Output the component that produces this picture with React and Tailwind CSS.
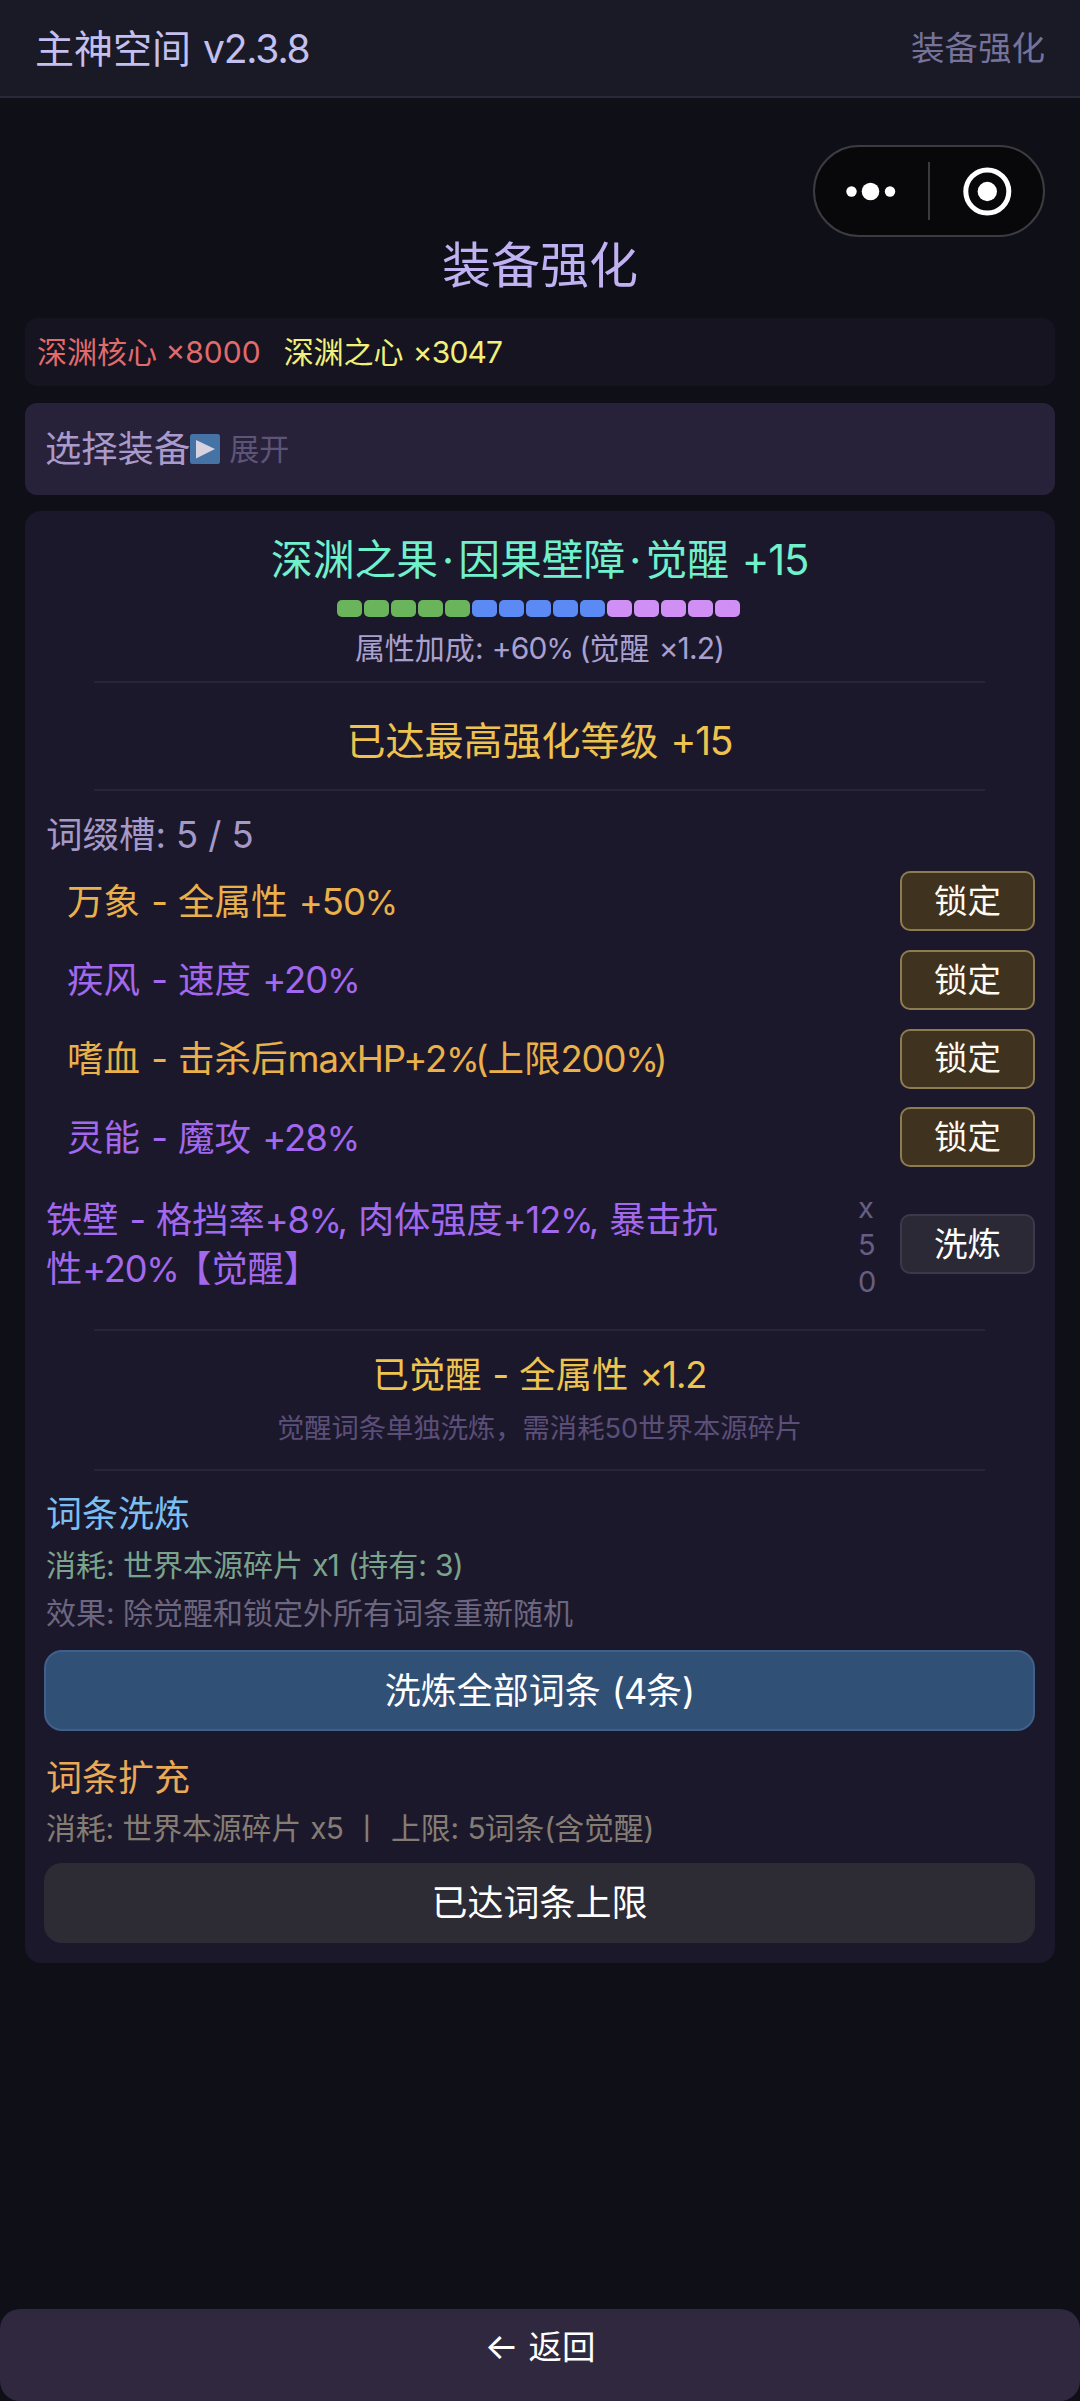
import React, { useState } from 'react';

const affixes = [
    { id: 1, text: '万象 - 全属性 +50%', color: 'text-[#eab04a]' },
    { id: 2, text: '疾风 - 速度 +20%', color: 'text-[#a268ee]' },
    { id: 3, text: '嗜血 - 击杀后maxHP+2%(上限200%)', color: 'text-[#eab04a]' },
    { id: 4, text: '灵能 - 魔攻 +28%', color: 'text-[#a268ee]' },
];

// latin runs are set a little tighter than the chinese text around them
const Mixed = ({ children }) =>
    children.split(/(%|[ -$&-~×]+)/).map((part, i) => {
        if (part === '%') {
            return (
                <span key={i} className="text-[0.93em] tracking-[-0.13em]">
                    {part}
                </span>
            );
        }
        if (i % 2 === 1) {
            return (
                <span
                    key={i}
                    className="tracking-[-0.03em] [word-spacing:0.055em]"
                >
                    {part}
                </span>
            );
        }
        return part;
    });

const Divider = () => <div className="mx-auto h-0.5 w-[891px] bg-[#28243a]" />;

const ProgressBar = () => {
    const cells = [];
    for (let i = 0; i < 15; i++) {
        let color = 'bg-[#6ab45c]';
        if (i >= 10) {
            color = 'bg-[#cf8ff5]';
        } else if (i >= 5) {
            color = 'bg-[#5b8af5]';
        }
        cells.push(
            <div key={i} className={`h-[17px] w-[25px] rounded-[5px] ${color}`} />
        );
    }
    return (
        <div className="mt-[15px] flex justify-center gap-0.5 pr-0.5">
            {cells}
        </div>
    );
};

const Capsule = () => (
    <div className="absolute top-[145px] left-[813px] flex h-[92px] w-[232px] items-center rounded-full border-2 border-[#3b3b40] bg-[#08080b]">
        <svg width="228" height="88" viewBox="0 0 228 88">
            <circle cx="36.5" cy="44.5" r="5.2" fill="#fff" />
            <circle cx="55.5" cy="44.5" r="8.8" fill="#fff" />
            <circle cx="75" cy="44.5" r="5.2" fill="#fff" />
            <rect x="113" y="15" width="2" height="58" fill="#3a3a3f" />
            <circle
                cx="172.3"
                cy="44.5"
                r="21.5"
                fill="none"
                stroke="#fff"
                strokeWidth="5"
            />
            <circle cx="172.3" cy="44.5" r="9.7" fill="#fff" />
        </svg>
    </div>
);

const App = () => {
    const [locked, setLocked] = useState([]);

    const toggleLock = (id) => {
        if (locked.includes(id)) {
            setLocked(locked.filter((item) => item !== id));
        } else {
            setLocked([...locked, id]);
        }
    };

    return (
        <div className="relative flex h-[2401px] w-[1080px] flex-col bg-[#0f0f17] font-['Inter','Noto_Sans_CJK_SC',sans-serif] font-normal">
            <header className="flex h-[98px] shrink-0 items-center justify-between border-b-2 border-[#2a2839] bg-[#1a1926] px-[35px]">
                <span className="text-[39px] leading-none text-[#c3c0f0]">
                    <Mixed>主神空间 v2.3.8</Mixed>
                </span>
                <span className="pt-0.5 text-[33.5px] leading-none text-[#75739a]">
                    装备强化
                </span>
            </header>

            <Capsule />

            <main className="flex grow flex-col px-[25px]">
                <h1 className="mt-[137px] h-[62px] text-center text-[49px] leading-[62px] text-[#c0b2f2]">
                    装备强化
                </h1>

                <div className="mt-[21px] flex h-[68px] items-center gap-[23px] rounded-xl bg-[#151420] px-3 text-[30px]">
                    <span className="text-[#e06b6d]">深渊核心 ×8000</span>
                    <span className="text-[#f2f07a]">
                        <Mixed>深渊之心 ×3047</Mixed>
                    </span>
                </div>

                <div className="mt-[17px] flex h-[92px] items-center rounded-xl bg-[#27223a] px-5">
                    <span className="text-[36.3px] leading-none text-[#a99acb]">
                        选择装备
                    </span>
                    <svg width="30" height="30" viewBox="0 0 30 30">
                        <rect width="30" height="30" rx="2.5" fill="#4573a5" />
                        <path d="M6 6 L25 15 L6 24.5 Z" fill="#d6d2e0" />
                    </svg>
                    <span className="ml-[9px] text-[30px] leading-none text-[#5e5478]">
                        展开
                    </span>
                </div>

                <section className="mt-4 flex h-[1452px] flex-col rounded-2xl bg-[#1c182b] pt-6 pr-5 pl-[19px]">
                    <h2 className="h-[50px] text-center text-[41.8px] leading-[50px] text-[#70f0cb]">
                        深渊之果<span className="mx-[4px]">·</span>因果壁障
                        <span className="mx-[4px]">·</span>
                        <Mixed>觉醒 +15</Mixed>
                    </h2>
                    <ProgressBar />
                    <p className="mt-[11px] mb-[13px] h-10 text-center text-[30px] leading-10 text-[#a8a1d0]">
                        <Mixed>属性加成: +60% (觉醒 ×1.2)</Mixed>
                    </p>
                    <Divider />
                    <p className="h-[106px] pt-[34px] text-center text-[39px] leading-[48px] text-[#eec24f]">
                        <Mixed>已达最高强化等级 +15</Mixed>
                    </p>
                    <Divider />

                    <p className="mt-5 h-12 pl-0.5 text-[36.5px] leading-[48px] text-[#a599c8]">
                        <Mixed>词缀槽: 5 / 5</Mixed>
                    </p>

                    <div className="mt-[12px] flex flex-col gap-[18.8px] pl-[23px]">
                        {affixes.map((item) => (
                            <div
                                key={item.id}
                                className="flex h-[60px] items-center justify-between"
                            >
                                <span
                                    className={`pt-0.5 text-[36.5px] leading-[48px] ${item.color}`}
                                >
                                    <Mixed>{item.text}</Mixed>
                                </span>
                                <button
                                    className="h-[60px] w-[135px] rounded-[10px] border-2 border-[#8c7c50] bg-[#3f321f] pt-px text-[33.5px] leading-none text-[#fffaf0]"
                                    onClick={() => toggleLock(item.id)}
                                >
                                    锁定
                                </button>
                            </div>
                        ))}
                    </div>

                    <div className="mt-[21px] flex h-[112px] items-center pl-0.5">
                        <p className="w-[700px] pt-0.5 text-[36.2px] leading-[48px] text-[#a268ee]">
                            <Mixed>铁壁 - 格挡率+8%, 肉体强度+12%, 暴击抗</Mixed>
                            <br />
                            <Mixed>性+20%【觉醒】</Mixed>
                        </p>
                        <span className="ml-[112px] w-5 text-[29px] leading-[37px] break-all text-[#675e84]">
                            x50
                        </span>
                        <button className="ml-auto h-[60px] w-[135px] rounded-[10px] border-2 border-[#3d394b] bg-[#2c2937] pt-px text-[33.5px] leading-none text-white">
                            洗炼
                        </button>
                    </div>

                    <div className="h-[29px]" />
                    <Divider />
                    <p className="mt-5 h-12 text-center text-[36.3px] leading-[48px] text-[#efc44e]">
                        <Mixed>已觉醒 - 全属性 ×1.2</Mixed>
                    </p>
                    <p className="mt-[10px] mb-5 h-10 text-center text-[27.3px] leading-10 text-[#5b4f7a]">
                        觉醒词条单独洗炼，需消耗50世界本源碎片
                    </p>
                    <Divider />

                    <h3 className="mt-[19px] h-12 pl-0.5 text-[36px] leading-[48px] text-[#7bbff2]">
                        词条洗炼
                    </h3>
                    <p className="mt-[3px] h-12 pl-0.5 text-[30px] leading-[48px] text-[#7aa38b]">
                        <Mixed>消耗: 世界本源碎片 x1 (持有: 3)</Mixed>
                    </p>
                    <p className="h-12 pl-0.5 text-[30px] leading-[48px] text-[#6c6680]">
                        <Mixed>效果: 除觉醒和锁定外所有词条重新随机</Mixed>
                    </p>
                    <button className="mt-[13px] h-[81px] shrink-0 rounded-[18px] border-2 border-[#40608a] bg-[#315076] text-[36px] leading-none text-white">
                        <Mixed>洗炼全部词条 (4条)</Mixed>
                    </button>

                    <h3 className="mt-[23px] h-12 pl-0.5 text-[36px] leading-[48px] text-[#eaa956]">
                        词条扩充
                    </h3>
                    <p className="mt-[2px] h-12 pl-0.5 text-[29.8px] leading-[48px] text-[#857d74]">
                        <Mixed>消耗: 世界本源碎片 x5 丨 上限: 5词条(含觉醒)</Mixed>
                    </p>
                    <button className="mt-[11px] h-20 shrink-0 rounded-[18px] bg-[#2d2b34] text-[36px] leading-none text-white">
                        已达词条上限
                    </button>
                </section>
            </main>

            <button className="h-[92px] w-full shrink-0 rounded-[20px] bg-[#30283e] pb-[17px] text-[33.5px] leading-none text-white">
                <span className="text-[36px]">←</span> 返回
            </button>
        </div>
    );
};

export default App;
